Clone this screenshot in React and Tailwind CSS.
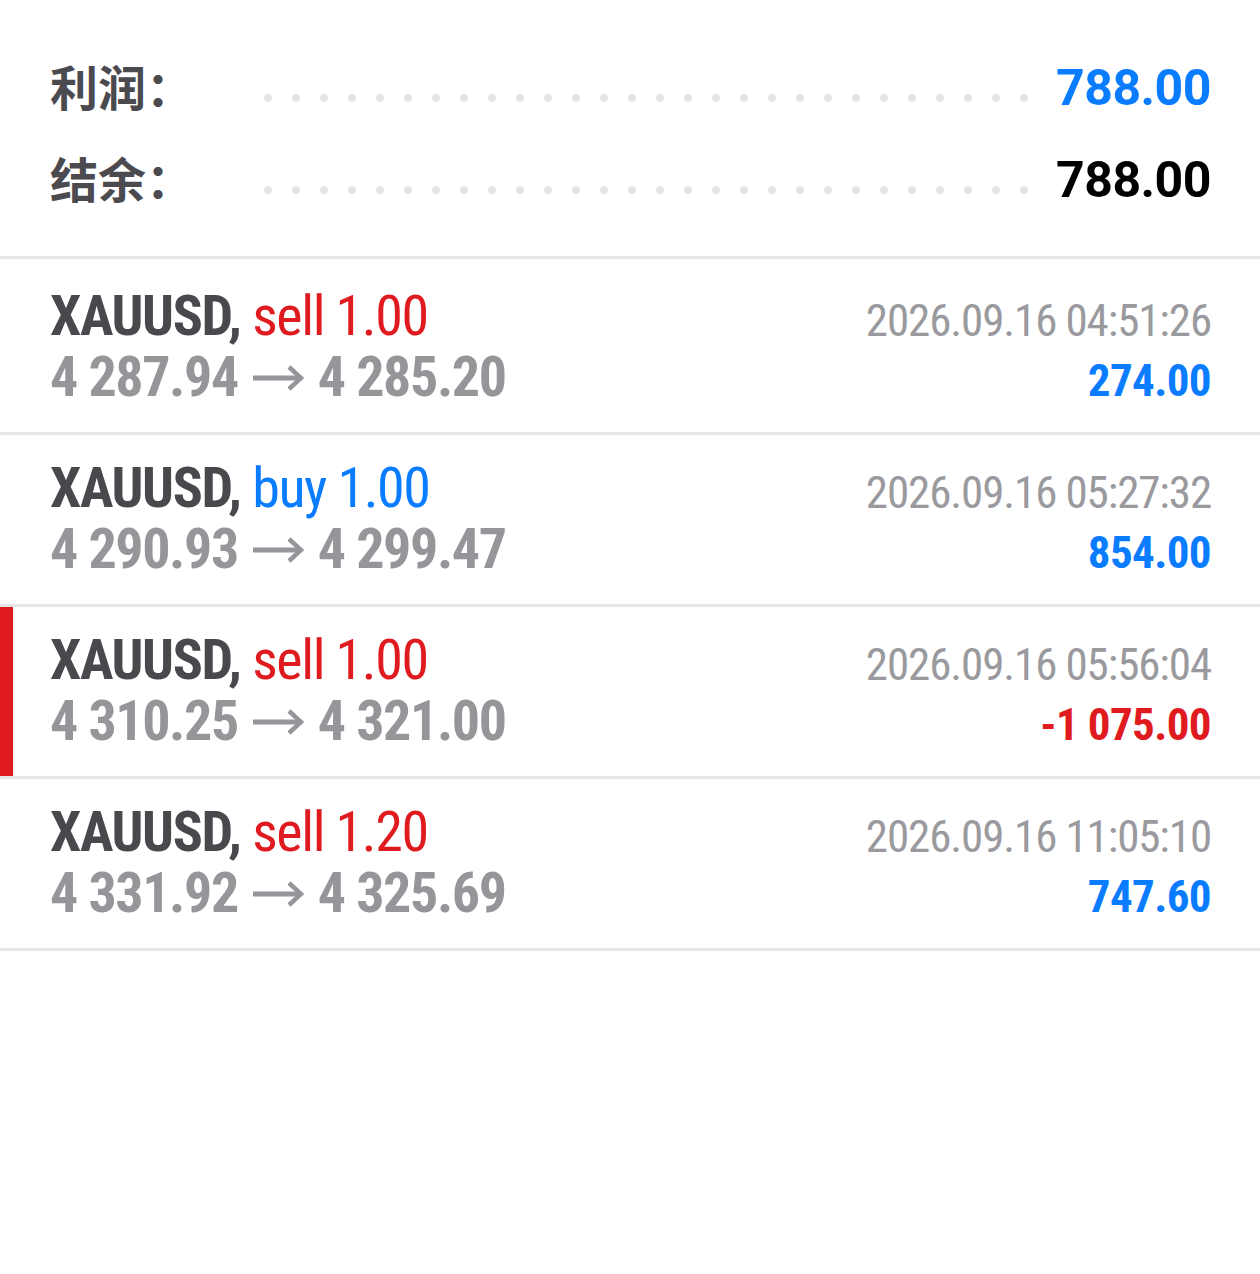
import React from "react";

const summary = [
  { label: "利润：", value: "788.00", color: "text-[#0a7cff]" },
  { label: "结余：", value: "788.00", color: "text-black" },
];

const deals = [
  { side: "sell", vol: "1.00", open: "4 287.94", close: "4 285.20", time: "2026.09.16 04:51:26", profit: "274.00" },
  { side: "buy", vol: "1.00", open: "4 290.93", close: "4 299.47", time: "2026.09.16 05:27:32", profit: "854.00" },
  { side: "sell", vol: "1.00", open: "4 310.25", close: "4 321.00", time: "2026.09.16 05:56:04", profit: "-1 075.00", marked: true },
  { side: "sell", vol: "1.20", open: "4 331.92", close: "4 325.69", time: "2026.09.16 11:05:10", profit: "747.60" },
];

const dots = Array.from({ length: 28 });

const Arrow = () => (
  <svg width="52" height="26" viewBox="0 0 52 26" className="mx-[14px] shrink-0" fill="none">
    <path d="M1 13 H49" stroke="#96969a" strokeWidth="5" />
    <path d="M37 2 L49 13 L37 24" stroke="#96969a" strokeWidth="4.5" strokeLinejoin="miter" />
  </svg>
);

const SummaryRow = ({ row }) => (
  <div className="flex h-[92px] items-center">
    <div className="-mt-[6px] w-[214px] font-['Noto_Sans_CJK_SC',sans-serif] text-[48px] font-bold text-[#4a4a4f]">
      {row.label}
    </div>
    <div className="mt-5 flex gap-[20px]">
      {dots.map((_, i) => (
        <span key={i} className="h-2 w-2 rounded-full bg-[#e4e4e4]" />
      ))}
    </div>
    <div className={`flex-1 text-right font-['Roboto',sans-serif] text-[50px] font-bold tracking-[-0.5px] ${row.color}`}>
      {row.value}
    </div>
  </div>
);

const DealRow = ({ deal, first }) => {
  const sideColor = deal.side === "buy" ? "text-[#0a7cff]" : "text-[#e01b1f]";
  const profitColor = deal.profit.startsWith("-") ? "text-[#e01b1f]" : "text-[#0a7cff]";

  return (
    <div
      className={`relative flex items-start justify-between border-b-[3px] border-[#e6e6e6] pl-[50px] pr-[49px] ${
        first ? "h-[176px] pt-[4px]" : "h-[172px]"
      }`}
    >
      {deal.marked && <div className="absolute bottom-0 left-0 top-0 w-[13px] bg-[#e01b1f]" />}

      <div className="pt-[23px] text-[56px] leading-[61px] tracking-[-1.4px]">
        <div>
          <span className="font-bold text-[#48484d]">XAUUSD, </span>
          <span className={sideColor}>
            {deal.side} {deal.vol}
          </span>
        </div>
        <div className="flex items-center font-bold text-[#96969a]">
          <span>{deal.open}</span>
          <Arrow />
          <span>{deal.close}</span>
        </div>
      </div>

      <div className="pt-[28px] text-right text-[45px] leading-[60px]">
        <div className="tracking-[-1.1px] text-[#9a9a9e]">{deal.time}</div>
        <div className={`font-bold tracking-[-0.6px] ${profitColor}`}>{deal.profit}</div>
      </div>
    </div>
  );
};

export default function App() {
  return (
    <div className="min-h-[1274px] w-[1260px] bg-white">
      {/* account summary */}
      <div className="h-[256px] pl-[50px] pr-[49px] pt-[42px]">
        {summary.map((row) => (
          <SummaryRow key={row.label} row={row} />
        ))}
      </div>

      {/* deals */}
      <div className="border-t-[3px] border-[#e6e6e6] font-['Roboto_Condensed','Roboto',sans-serif]">
        {deals.map((deal, i) => (
          <DealRow key={deal.time} deal={deal} first={i === 0} />
        ))}
      </div>
    </div>
  );
}
